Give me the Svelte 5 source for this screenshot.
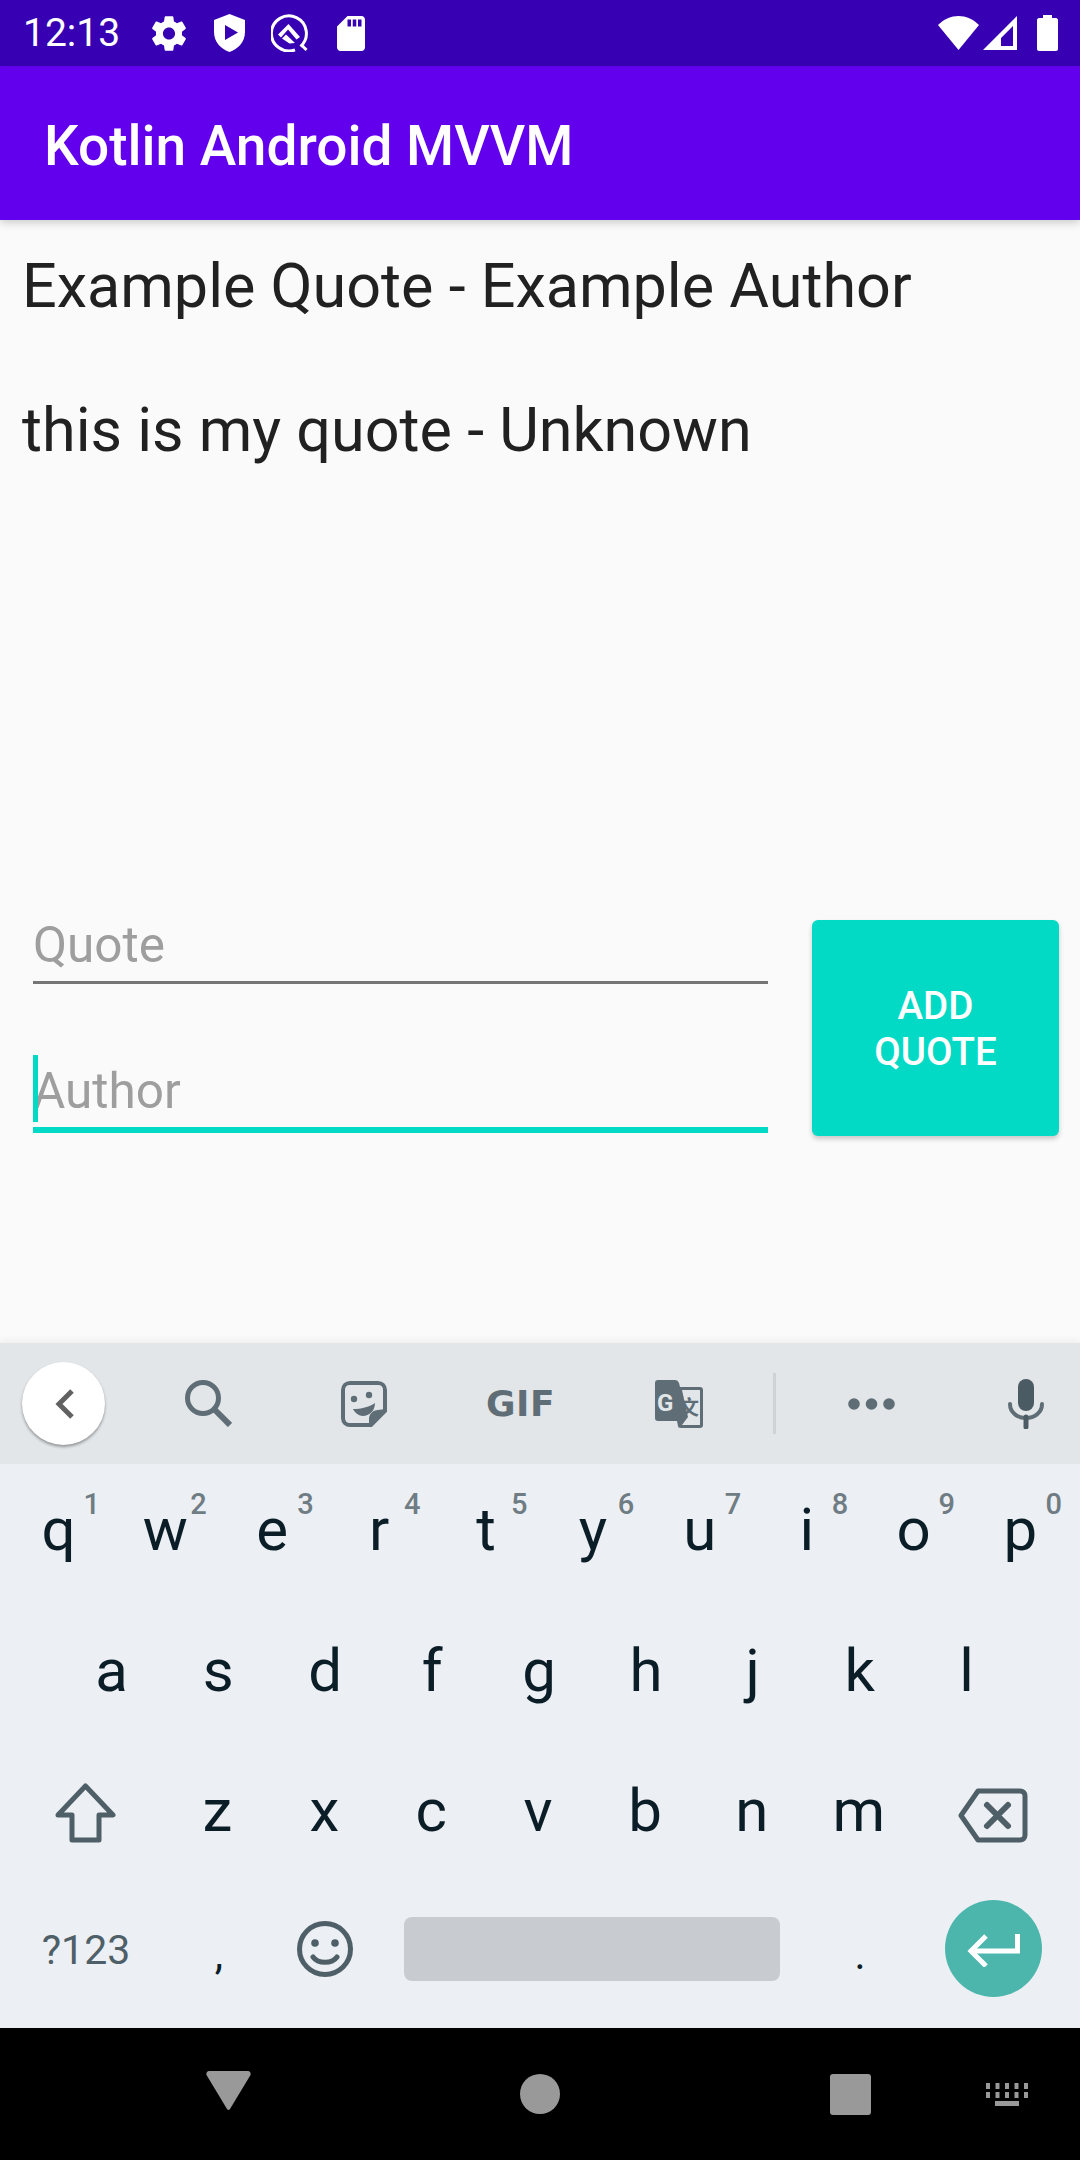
<script>
  const quotes = ["Example Quote - Example Author", "this is my quote - Unknown"];
  const rowOne = [["q", "1"], ["w", "2"], ["e", "3"], ["r", "4"], ["t", "5"], ["y", "6"], ["u", "7"], ["i", "8"], ["o", "9"], ["p", "0"]];
  const rowTwo = ["a", "s", "d", "f", "g", "h", "j", "k", "l"];
  const rowThree = ["z", "x", "c", "v", "b", "n", "m"];
</script>

<div class="phone">
  <div class="status">
    <span class="time">12:13</span>
    <svg class="ic-gear" viewBox="2.2 2 19.6 20" fill="#fff"><path d="M19.43 12.98c.04-.32.07-.64.07-.98s-.03-.66-.07-.98l2.11-1.65c.19-.15.24-.42.12-.64l-2-3.46c-.12-.22-.39-.3-.61-.22l-2.49 1c-.52-.4-1.08-.73-1.69-.98l-.38-2.65C14.46 2.18 14.25 2 14 2h-4c-.25 0-.46.18-.49.42l-.38 2.65c-.61.25-1.17.59-1.69.98l-2.49-1c-.23-.09-.49 0-.61.22l-2 3.46c-.13.22-.07.49.12.64l2.11 1.65c-.04.32-.07.65-.07.98s.03.66.07.98l-2.11 1.65c-.19.15-.24.42-.12.64l2 3.46c.12.22.39.3.61.22l2.49-1c.52.4 1.08.73 1.69.98l.38 2.65c.03.24.24.42.49.42h4c.25 0 .46-.18.49-.42l.38-2.65c.61-.25 1.17-.59 1.69-.98l2.49 1c.23.09.49 0 .61-.22l2-3.46c.12-.22.07-.49-.12-.64l-2.11-1.65zM12 15.5c-1.93 0-3.5-1.57-3.5-3.5s1.57-3.5 3.5-3.5 3.5 1.57 3.5 3.5-1.57 3.5-3.5 3.5z"/></svg>
    <svg class="ic-shield" viewBox="0 0 31 38"><path fill="#fff" fill-rule="evenodd" d="M15.5 0 L31 6 V18 C31 28 24 35 15.5 38 C7 35 0 28 0 18 V6 Z M11 11 V26 L24 18.5 Z"/></svg>
    <svg class="ic-q" viewBox="0 0 38 38"><path d="M29.500 32.500 A17.500 17.500 0 1 0 24 35.800" fill="none" stroke="#fff" stroke-width="3"/><path d="M31 31.500 L35.500 36" fill="none" stroke="#fff" stroke-width="3"/><path fill="#fff" d="M17.500 10 L29 23 L25.500 25.500 L17 15.500 L10 23.500 L7 20.500 Z M11 24.500 L15 20.500 L24 29 L18.500 29.500 Z"/></svg>
    <svg class="ic-sd" viewBox="4 2 16 20" fill="#fff"><path d="M18 2h-8L4.02 8 4 20c0 1.1.9 2 2 2h12c1.1 0 2-.9 2-2V4c0-1.1-.9-2-2-2zm-6 6h-2V4h2v4zm3 0h-2V4h2v4zm3 0h-2V4h2v4z"/></svg>
    <span class="spacer"></span>
    <svg class="ic-wifi" viewBox="0 0 41 34" fill="#fff"><path d="M0 9 C12 -3 29 -3 41 9 L20.500 34 Z"/></svg>
    <svg class="ic-signal" viewBox="0 0 34 34"><path fill="#fff" fill-rule="evenodd" d="M34 0 V34 H0 Z M30 10 L18 22 V30 H30 Z"/></svg>
    <svg class="ic-battery" viewBox="0 0 21 36" fill="#fff"><path d="M6 0 H15 V3 H19 C20 3 21 4 21 5 V34 C21 35 20 36 19 36 H2 C1 36 0 35 0 34 V5 C0 4 1 3 2 3 H6 Z"/></svg>
  </div>

  <header class="appbar">Kotlin Android MVVM</header>

  <main class="content">
    <ul class="quotes">
      {#each quotes as quote}
        <li>{quote}</li>
      {/each}
    </ul>

    <form class="form" on:submit|preventDefault>
      <div class="fields">
        <input class="field" placeholder="Quote" />
        <div class="author">
          <input class="field focused" placeholder="Author" />
          <span class="caret"></span>
        </div>
      </div>
      <button type="button" class="add">ADD<br />QUOTE</button>
    </form>
  </main>

  <section class="keyboard">
    <div class="toolbar">
      <span class="back">
        <svg viewBox="0 0 20 32" fill="none" stroke="#616161" stroke-width="5"><path d="M18 3 L5 16 L18 29"/></svg>
      </span>
      <svg class="t-search" viewBox="0 0 47 47" fill="none" stroke="#5f6e76" stroke-width="5"><circle cx="18" cy="18" r="15.500"/><path d="M29 29 L45 45" stroke-width="6"/></svg>
      <svg class="t-sticker" viewBox="0 0 46 46" fill="none" stroke="#5f6e76" stroke-width="4"><path d="M30 44 H9 C5 44 2 41 2 37 V9 C2 5 5 2 9 2 H37 C41 2 44 5 44 9 V30 Z"/><path fill="#5f6e76" stroke="none" d="M44 28 L28 46 V38 C28 33 32 29 37 29 Z"/><path fill="#5f6e76" stroke="none" d="M12 28 C20 28 28 26 34 22 C34 30 28 35 22 35 C18 35 14 32 12 28 Z"/><circle cx="13" cy="18" r="3.200" fill="#5f6e76" stroke="none"/><circle cx="28" cy="14" r="3.200" fill="#5f6e76" stroke="none"/></svg>
      <span class="gif">GIF</span>
      <svg class="t-translate" viewBox="0 0 48 48"><path fill="#5f6e76" d="M3 0 H20 C22 0 23 1 24 3 L25 7 H45 C47 7 48 8 48 10 V45 C48 47 47 48 45 48 H26 C24 48 23 47 23 46 L22 41 H3 C1 41 0 40 0 38 V3 C0 1 1 0 3 0 Z"/><path fill="#e2e6e9" d="M27 10 H44 C45 10 45 10 45 11 V44 C45 45 45 45 44 45 H27 L33 37 Z"/><text x="2" y="31" class="tg">G</text><text x="24" y="35" class="tz">文</text></svg>
      <span class="divider"></span>
      <svg class="t-dots" viewBox="0 0 47 12" fill="#5f6e76"><circle cx="6" cy="6" r="5.800"/><circle cx="23.500" cy="6" r="5.800"/><circle cx="41" cy="6" r="5.800"/></svg>
      <svg class="t-mic" viewBox="0 0 36 50"><rect x="10" y="0" width="16" height="32" rx="8" fill="#4b5b63"/><path d="M2 25 C2 34 10 39 18 39 C26 39 34 34 34 25" fill="none" stroke="#5f6e76" stroke-width="4" stroke-linecap="round"/><path d="M18 38 V48" stroke="#4b5b63" stroke-width="5" stroke-linecap="round"/></svg>
    </div>

    <div class="keys">
      <div class="row">
        {#each rowOne as [letter, digit]}
          <div class="key">{letter}<span class="digit">{digit}</span></div>
        {/each}
      </div>
      <div class="row inset">
        {#each rowTwo as letter}
          <div class="key">{letter}</div>
        {/each}
      </div>
      <div class="row">
        <div class="key shift-key">
          <svg class="shift" viewBox="0 0 61 60" fill="none" stroke="#4f5f67" stroke-width="5" stroke-linejoin="round"><path d="M30.500 3 L58 32 H44 V57 H17 V32 H3 Z"/></svg>
        </div>
        {#each rowThree as letter}
          <div class="key">{letter}</div>
        {/each}
        <div class="key wide">
          <svg class="backspace" viewBox="0 0 70 55" fill="none" stroke="#4f5f67" stroke-width="5" stroke-linejoin="round"><path d="M20 3 H62 C65 3 67 5 67 8 V47 C67 50 65 52 62 52 H20 L3 27.500 Z"/><path d="M29 17 L50 38 M50 17 L29 38" stroke-width="6" stroke-linecap="round"/></svg>
        </div>
      </div>
      <div class="row">
        <div class="key wide symbols">?123</div>
        <div class="key punct comma">,</div>
        <div class="key emoji">
          <svg viewBox="0 0 56 56" fill="none" stroke="#4f5f67" stroke-width="5"><circle cx="28" cy="28" r="25.500"/><circle cx="18" cy="22" r="3.800" fill="#4f5f67" stroke="none"/><circle cx="38" cy="22" r="3.800" fill="#4f5f67" stroke="none"/><path d="M16 36 C21 43 35 43 40 36" stroke-linecap="round"/></svg>
        </div>
        <div class="space"></div>
        <div class="key punct dot">.</div>
        <div class="enter">
          <svg viewBox="0 0 53 33" fill="none" stroke="#fff" stroke-width="5"><path d="M50.500 0 V17 H5"/><path d="M19 2 L4 17 L19 32"/></svg>
        </div>
      </div>
    </div>
  </section>

  <nav class="navbar">
    <svg class="n-back" viewBox="0 0 45 39" fill="#999"><path d="M3 0 H42 C44 0 45 2 44.500 4 L24 38 C23 39.300 22 39.300 21 38 L.5 4 C0 2 1 0 3 0 Z"/></svg>
    <span class="n-home"></span>
    <span class="n-recent"></span>
    <svg class="n-kbd" viewBox="0 0 42 23" fill="#999">
      <path d="M0 0h4v6h-4zM9.500 0h4v6h-4zM19 0h4v6h-4zM28.500 0h4v6h-4zM38 0h4v6h-4zM0 9h4v6h-4zM9.500 9h4v6h-4zM19 9h4v6h-4zM28.500 9h4v6h-4zM38 9h4v6h-4zM9 18h24v5h-24z"/>
    </svg>
  </nav>
</div>

<style>
  :global(body) {
    margin: 0;
    background: #fafafa;
  }

  .phone {
    width: 1080px;
    height: 2160px;
    display: flex;
    flex-direction: column;
    font-family: Roboto, "Liberation Sans", sans-serif;
    overflow: hidden;
  }

  svg {
    display: block;
    flex: none;
  }

  .status {
    height: 66px;
    flex: none;
    background: #3700b3;
    display: flex;
    align-items: center;
    padding-left: 23px;
    color: #fff;
  }
  .time {
    font-size: 39px;
    width: 129px;
  }
  .ic-gear {
    width: 34px;
    height: 35px;
    margin-right: 28px;
  }
  .ic-shield {
    width: 31px;
    height: 38px;
    margin-right: 26px;
  }
  .ic-q {
    width: 38px;
    height: 38px;
    margin-right: 28px;
  }
  .ic-sd {
    width: 28px;
    height: 35px;
  }
  .spacer {
    flex: 1;
  }
  .ic-wifi {
    width: 41px;
    height: 34px;
    margin-right: 4px;
  }
  .ic-signal {
    width: 34px;
    height: 34px;
    margin-right: 20px;
  }
  .ic-battery {
    width: 21px;
    height: 36px;
    margin-right: 22px;
  }

  .appbar {
    height: 154px;
    flex: none;
    box-sizing: border-box;
    background: #6200ee;
    color: #fff;
    font-size: 55px;
    font-weight: 500;
    line-height: 160px;
    padding-left: 44px;
    box-shadow: 0 3px 8px rgba(0, 0, 0, 0.18);
    position: relative;
  }

  .content {
    flex: 1;
    display: flex;
    flex-direction: column;
    justify-content: space-between;
    background: #fafafa;
  }

  .quotes {
    list-style: none;
    margin: 0;
    padding: 0 0 0 22px;
  }
  .quotes li {
    font-size: 61.100px;
    line-height: 132px;
    color: #212121;
    height: 144px;
  }

  .form {
    display: flex;
    padding: 0 21px 207px 33px;
    align-items: flex-start;
  }
  .fields {
    width: 735px;
    margin-right: 44px;
  }
  .field {
    display: block;
    box-sizing: border-box;
    width: 100%;
    height: 64px;
    padding: 0 0 12px;
    border: 0;
    border-bottom: 3px solid #757575;
    background: none;
    font: 49.500px Roboto, sans-serif;
    outline: none;
  }
  .field::placeholder {
    color: #9e9e9e;
    opacity: 1;
  }
  .author {
    position: relative;
    margin-top: 69px;
    height: 80px;
  }
  .author .field {
    height: 80px;
    padding: 2px 0 0;
  }
  .field.focused {
    border-bottom: 6px solid #03dac5;
  }
  .caret {
    position: absolute;
    left: 0;
    top: 2px;
    width: 5px;
    height: 67px;
    background: #03dac5;
  }

  .add {
    width: 247px;
    height: 216px;
    border: 0;
    border-radius: 6px;
    background: #03dac5;
    color: #fff;
    font: 500 38.500px/46px Roboto, sans-serif;
    padding: 2px 0 0;
    box-shadow: 0 3px 5px rgba(0, 0, 0, 0.2);
  }

  .keyboard {
    flex: none;
    height: 685px;
    display: flex;
    flex-direction: column;
    background: #eceff3;
    box-shadow: 0 -2px 8px rgba(0, 0, 0, 0.06);
    position: relative;
  }

  .toolbar {
    height: 121px;
    flex: none;
    background: #e2e6e9;
    display: flex;
    align-items: center;
    padding-left: 22px;
  }
  .back {
    width: 83px;
    height: 83px;
    border-radius: 50%;
    background: #fff;
    box-shadow: 0 2px 3px rgba(0, 0, 0, 0.35);
    display: flex;
    align-items: center;
    justify-content: center;
    margin-right: 80px;
  }
  .back svg {
    width: 20px;
    height: 32px;
  }
  .t-search {
    width: 47px;
    height: 47px;
    margin-right: 109px;
  }
  .t-sticker {
    width: 46px;
    height: 46px;
    margin-right: 99px;
  }
  .gif {
    width: 66px;
    margin-right: 103px;
    font-family: "DejaVu Sans", sans-serif;
    font-size: 36px;
    font-weight: 700;
    color: #5f6e76;
    letter-spacing: 0.5px;
  }
  .t-translate {
    width: 48px;
    height: 48px;
    margin-right: 70px;
  }
  .tg {
    font: 700 24px Roboto, sans-serif;
    fill: #e2e6e9;
  }
  .tz {
    font: 700 20px "Noto Sans CJK SC", sans-serif;
    fill: #5f6e76;
  }
  .divider {
    width: 3px;
    height: 61px;
    background: #cfd3d6;
    margin-right: 72px;
  }
  .t-dots {
    width: 47px;
    height: 12px;
    margin-right: 113px;
  }
  .t-mic {
    width: 36px;
    height: 50px;
  }

  .keys {
    flex: 1;
    display: flex;
    flex-direction: column;
  }
  .row {
    height: 140.750px;
    flex: none;
    display: flex;
    padding-left: 5px;
  }
  .row.inset {
    padding-left: 58px;
  }
  .key {
    width: 106.900px;
    flex: none;
    box-sizing: border-box;
    padding-bottom: 10px;
    position: relative;
    display: flex;
    align-items: center;
    justify-content: center;
    font-size: 60px;
    color: #0b1d27;
  }
  .key.wide {
    width: 162px;
  }
  .key.shift-key {
    width: 159px;
    justify-content: flex-start;
    padding-left: 50px;
  }
  .digit {
    position: absolute;
    right: 12px;
    top: 23px;
    font-size: 29px;
    line-height: 34px;
    font-weight: 500;
    color: #6f7c83;
  }
  .shift {
    width: 61px;
    height: 60px;
    margin-top: 4px;
  }
  .backspace {
    width: 70px;
    height: 55px;
    margin-top: 10px;
  }
  .symbols {
    font-size: 41px;
    color: #4f5f67;
    padding-bottom: 14px;
  }
  .punct {
    font-size: 42px;
    padding-top: 5px;
  }
  .comma {
    width: 104px;
  }
  .emoji {
    width: 108px;
    padding-bottom: 15px;
  }
  .emoji svg {
    width: 56px;
    height: 56px;
  }
  .space {
    width: 376px;
    height: 64px;
    margin: 31px 0 0 25px;
    border-radius: 8px;
    background: #c8ccd0;
  }
  .dot {
    width: 160px;
  }
  .enter {
    width: 97px;
    height: 97px;
    border-radius: 50%;
    background: #4db6ac;
    margin: 14px 0 0 5px;
    display: flex;
    align-items: center;
    justify-content: center;
  }
  .enter svg {
    width: 53px;
    height: 33px;
    margin-top: 4px;
  }

  .navbar {
    height: 132px;
    flex: none;
    background: #000;
    display: flex;
    align-items: flex-start;
  }
  .n-back {
    width: 45px;
    height: 39px;
    margin: 43px 269px 0 206px;
  }
  .n-home {
    width: 40px;
    height: 40px;
    border-radius: 50%;
    background: #999;
    margin: 46px 270px 0 0;
  }
  .n-recent {
    width: 41px;
    height: 41px;
    border-radius: 3px;
    background: #999;
    margin: 46px 115px 0 0;
  }
  .n-kbd {
    width: 42px;
    height: 23px;
    margin-top: 55px;
  }
</style>
